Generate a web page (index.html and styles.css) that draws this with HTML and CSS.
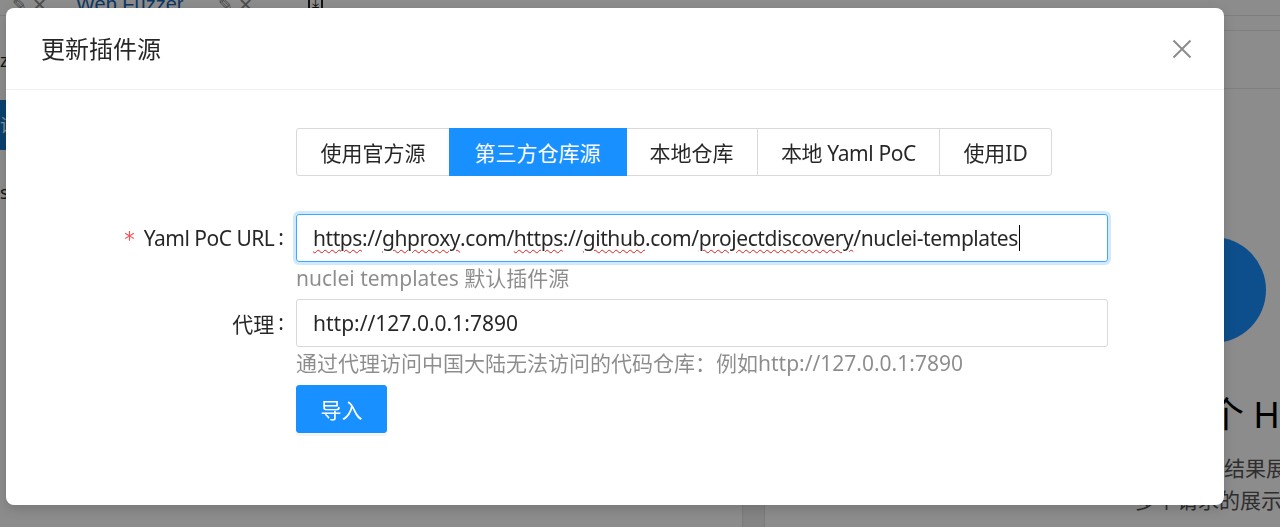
FILE: index.html
```html
<!DOCTYPE html>
<html lang="zh-CN">
<head>
<meta charset="utf-8">
<title>更新插件源</title>
<link rel="stylesheet" href="styles.css">
</head>
<body>
<div class="app">
  <div class="tabs">
    <span class="tab-icons">✎ ✕</span>
    <span class="tab-title">Web Fuzzer</span>
    <span class="tab-icons">✎ ✕</span>
    <span class="tab-box">⤓</span>
  </div>
  <div class="main">
    <div class="left-pane">
      <div class="left-top">z</div>
      <div class="left-btn">读</div>
      <div class="left-s">s</div>
      <div class="code">
        <div class="code-line">(<span class="kw">KHTML</span>, like Gecko) Chrome/100.0.0.0 Safari/537.36</div>
        <div class="code-line">  <span class="str">"Chromium"</span>;v=<span class="str">"100"</span>, <span class="str">"Google Chrome"</span>;v=<span class="str">"100"</span>, <span class="str">"Not-A.Brand"</span></div>
      </div>
    </div>
    <div class="gutter"></div>
    <div class="right-pane">
      <div class="right-head"></div>
      <div class="right-body">
        <div class="circle"></div>
        <div class="big-text">发送一个 HTTP 请求</div>
        <div class="small-text">查看结果展示</div>
        <div class="small-text second">多个请求的展示</div>
      </div>
    </div>
  </div>
</div>

<div class="mask"></div>

<div class="modal">
  <div class="modal-header">
    <div class="modal-title">更新插件源</div>
    <button class="modal-close" aria-label="Close">
      <svg viewBox="0 0 24 24" width="24" height="24"><path d="M3.5 3.5 L20.5 20.5 M20.5 3.5 L3.5 20.5" stroke="#8c8c8c" stroke-width="2" fill="none"/></svg>
    </button>
  </div>
  <div class="modal-body">
    <div class="form-row row-seg">
      <div class="label"></div>
      <div class="control">
        <div class="segmented">
          <span class="seg">使用官方源</span>
          <span class="seg active">第三方仓库源</span>
          <span class="seg">本地仓库</span>
          <span class="seg seg-latin">本地 Yaml PoC</span>
          <span class="seg">使用ID</span>
        </div>
      </div>
    </div>
    <div class="form-row row-url">
      <div class="label"><span class="req">*</span><span class="label-latin">Yaml PoC URL</span><span class="colon">:</span></div>
      <div class="control">
        <div class="input focused url"><span class="sp">https</span>://<span class="sp">ghproxy</span>.com/<span class="sp">https</span>://<span class="sp">github</span>.com/<span class="sp">projectdiscovery</span>/nuclei-templates<span class="caret"></span></div>
        <div class="help help-1">nuclei templates 默认插件源</div>
      </div>
    </div>
    <div class="form-row row-proxy">
      <div class="label">代理<span class="colon">:</span></div>
      <div class="control">
        <div class="input">http://127.0.0.1:7890</div>
        <div class="help help-2">通过代理访问中国大陆无法访问的代码仓库：例如http://127.0.0.1:7890</div>
      </div>
    </div>
    <div class="form-row row-btn">
      <div class="label"></div>
      <div class="control">
        <button class="primary">导入</button>
      </div>
    </div>
  </div>
</div>
</body>
</html>
```

FILE: styles.css
```css
* { box-sizing: border-box; }

html, body {
  margin: 0;
  padding: 0;
  width: 1280px;
  height: 527px;
  overflow: hidden;
  font-family: "Noto Sans", "Noto Sans CJK SC", sans-serif;
  background: #ffffff;
}

/* ---------- background app ---------- */
.app {
  display: flex;
  flex-direction: column;
  height: 527px;
  color: #1f1f1f;
}

.tabs {
  display: flex;
  align-items: flex-end;
  height: 30px;
  margin-top: -14px;
  padding-left: 12px;
  gap: 0;
  font-size: 21px;
  line-height: 22px;
  border-bottom: 1px solid #e6e6e6;
}
.tab-icons { color: #8c8c8c; font-size: 18px; width: 50px; }
.tab-title {
  color: #1463b5;
  margin-left: 14px;
  width: 142px;
  font-family: "Liberation Sans", sans-serif;
  font-size: 20px;
}
.tab-box {
  margin-left: 40px;
  border: 2px solid #222;
  padding: 0 2px;
  font-size: 16px;
}

.main {
  flex: 1;
  display: grid;
  grid-template-columns: 742px 23px 1fr;
  min-height: 0;
}

.left-pane {
  display: flex;
  flex-direction: column;
  min-width: 0;
}
.left-top {
  margin-top: 32px;
  font-size: 18px;
}
.left-btn {
  margin-top: 28px;
  width: 40px;
  height: 50px;
  background: #1677c9;
  color: #fff;
  font-size: 18px;
  line-height: 50px;
}
.left-s {
  margin-top: 30px;
  font-size: 18px;
}
.code {
  margin-top: auto;
  padding-left: 5px;
  font-family: "Liberation Mono", "DejaVu Sans Mono", monospace;
  font-size: 16.4px;
  line-height: 26px;
  margin-bottom: -18px;
  white-space: pre;
}
.kw { color: #1a2fd1; }
.str { color: #3f7f00; }

.gutter {
  background: #f0f0f0;
  border-left: 1px solid #e0e0e0;
  border-right: 1px solid #e0e0e0;
}

.right-pane {
  display: flex;
  flex-direction: column;
  min-width: 0;
  overflow: hidden;
}
.right-head {
  margin-top: 14px;
  height: 59px;
  border-top: 1px solid #e8e8e8;
  border-bottom: 1px solid #e8e8e8;
}
.right-body {
  padding-left: 395px;
  display: flex;
  flex-direction: column;
  align-items: flex-start;
}
.circle {
  margin-top: 148px;
  width: 106px;
  height: 106px;
  border-radius: 50%;
  background: #1890ff;
}
.big-text {
  margin-top: 50px;
  margin-left: -60px;
  white-space: nowrap;
  font-size: 36px;
  line-height: 44px;
  color: #000;
}
.small-text {
  margin-top: 15px;
  margin-left: 22px;
  white-space: nowrap;
  font-size: 21px;
  line-height: 32px;
  color: #555;
}
.small-text.second { margin-top: 0; margin-left: -25px; }

/* ---------- mask ---------- */
.mask {
  position: fixed;
  inset: 0;
  background: rgba(0, 0, 0, 0.45);
}

/* ---------- modal ---------- */
.modal {
  position: absolute;
  top: 8px;
  left: 6px;
  width: 1218px;
  background: #fff;
  border-radius: 8px;
  box-shadow: 0 4px 12px rgba(0, 0, 0, 0.15);
  color: rgba(0, 0, 0, 0.85);
  font-size: 21px;
}

.modal-header {
  display: flex;
  align-items: center;
  justify-content: space-between;
  padding: 24px 36px 24px 35px;
  border-bottom: 1.5px solid #f0f0f0;
}
.modal-title {
  font-size: 24px;
  line-height: 33px;
  color: rgba(0, 0, 0, 0.85);
}
.modal-close {
  border: 0;
  background: none;
  padding: 0;
  margin-right: -6px;
  width: 24px;
  height: 24px;
  display: flex;
}

.modal-body {
  padding: 38px 36px 36px 36px;
}

.form-row {
  display: grid;
  grid-template-columns: 254px 812px;
}
.row-seg { margin-bottom: 38px; }
.row-btn { margin-bottom: 36px; }

.label {
  display: flex;
  align-items: center;
  justify-content: flex-end;
  height: 48px;
  white-space: nowrap;
  color: rgba(0, 0, 0, 0.85);
}
.label-latin { letter-spacing: -0.5px; }
.req {
  color: #ff4d4f;
  margin-right: 9px;
  font-family: "DejaVu Sans", sans-serif;
  font-size: 21px;
  line-height: 1;
  position: relative;
  top: 2px;
}
.colon {
  margin: 0 12px 0 4px;
  position: relative;
  top: -1px;
}

.control { min-width: 0; }

.segmented {
  display: inline-flex;
  height: 48px;
}
.seg {
  display: inline-flex;
  align-items: center;
  height: 48px;
  padding: 0 23.5px;
  border: 1.5px solid #d9d9d9;
  margin-left: -1.5px;
  color: rgba(0, 0, 0, 0.85);
  white-space: nowrap;
}
.seg:first-child {
  margin-left: 0;
  border-radius: 3px 0 0 3px;
}
.seg:last-child { border-radius: 0 3px 3px 0; }
.seg-latin { letter-spacing: -0.4px; }
.seg.active {
  background: #1890ff;
  border-color: #1890ff;
  color: #fff;
  position: relative;
  padding: 0 25px;
}

.input {
  height: 48px;
  border: 1.5px solid #d9d9d9;
  border-radius: 3px;
  padding: 0 16px;
  display: flex;
  align-items: center;
  white-space: pre;
  color: rgba(0, 0, 0, 0.85);
}
.input.url { letter-spacing: -0.43px; }
.input.focused {
  border-color: #40a9ff;
  box-shadow: 0 0 0 3px rgba(24, 144, 255, 0.2);
}
.sp {
  text-decoration: underline wavy #e02020;
  text-decoration-thickness: 1px;
  text-underline-offset: 3px;
}
.caret {
  display: inline-block;
  width: 1.5px;
  height: 26px;
  background: #000;
  margin-left: 1px;
}

.help {
  color: rgba(0, 0, 0, 0.45);
  line-height: 33px;
  white-space: nowrap;
}
.help-1 { height: 37px; }
.help-2 { height: 38px; }

.primary {
  height: 48px;
  width: 91px;
  border: 1.5px solid #1890ff;
  background: #1890ff;
  color: #fff;
  font-family: inherit;
  font-size: 21px;
  border-radius: 3px;
  padding: 0;
  box-shadow: 0 3px 0 rgba(0, 0, 0, 0.045);
}
```
